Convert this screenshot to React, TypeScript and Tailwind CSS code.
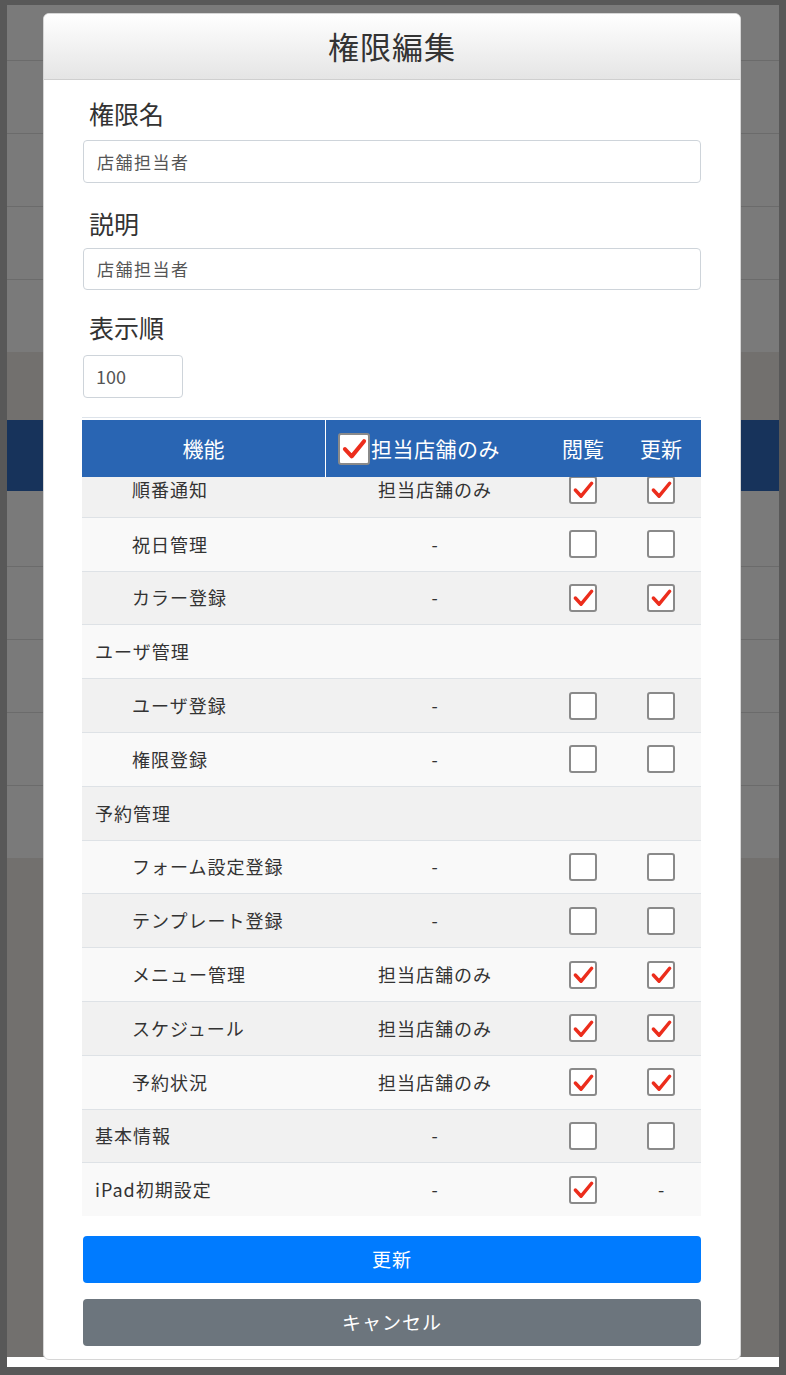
import React from "react";

type Row = {
  name: string;
  indent: boolean;
  scope: string | null;
  view: boolean | null;
  edit: boolean | null;
};

const ROWS: Row[] = [
  { name: "順番通知", indent: true, scope: "担当店舗のみ", view: true, edit: true },
  { name: "祝日管理", indent: true, scope: "-", view: false, edit: false },
  { name: "カラー登録", indent: true, scope: "-", view: true, edit: true },
  { name: "ユーザ管理", indent: false, scope: null, view: null, edit: null },
  { name: "ユーザ登録", indent: true, scope: "-", view: false, edit: false },
  { name: "権限登録", indent: true, scope: "-", view: false, edit: false },
  { name: "予約管理", indent: false, scope: null, view: null, edit: null },
  { name: "フォーム設定登録", indent: true, scope: "-", view: false, edit: false },
  { name: "テンプレート登録", indent: true, scope: "-", view: false, edit: false },
  { name: "メニュー管理", indent: true, scope: "担当店舗のみ", view: true, edit: true },
  { name: "スケジュール", indent: true, scope: "担当店舗のみ", view: true, edit: true },
  { name: "予約状況", indent: true, scope: "担当店舗のみ", view: true, edit: true },
  { name: "基本情報", indent: false, scope: "-", view: false, edit: false },
  { name: "iPad初期設定", indent: false, scope: "-", view: true, edit: null },
];

const FONT = {
  fontFamily: '"Noto Sans CJK JP", "Noto Sans", sans-serif',
};

const Check = ({ on, size = 28 }: { on: boolean; size?: number }) => (
  <span
    className="inline-flex items-center justify-center bg-white border-2 border-[#8a8a8a] rounded-[3px]"
    style={{ width: size, height: size }}
  >
    {on && (
      <svg viewBox="0 0 24 24" width={size - 5} height={size - 5}>
        <path
          d="M3.5 12.5 L9.5 19 L20.5 5.5"
          fill="none"
          stroke="#ec2d1c"
          strokeWidth="3.6"
          strokeLinecap="round"
          strokeLinejoin="round"
        />
      </svg>
    )}
  </span>
);

const Backdrop = () => (
  <div className="flex flex-col h-full">
    <div className="h-[55px] bg-[#7a7a7a]" />
    {[0, 1, 2, 3].map((i) => (
      <div key={i} className="h-[73px] bg-[#7a7a7a] border-t border-[#6b6b6b]" />
    ))}
    <div className="h-[68px] bg-[#72706e]" />
    <div className="h-[71px] bg-[#17335b]" />
    <div className="h-[75px] bg-[#7a7a7a]" />
    {[0, 1, 2, 3].map((i) => (
      <div key={i} className="h-[73px] bg-[#7a7a7a] border-t border-[#6b6b6b]" />
    ))}
    <div className="flex-1 bg-[#72706e]" />
    <div className="h-[10px] bg-white" />
  </div>
);

export default function App() {
  return (
    <div
      className="w-[786px] h-[1375px] bg-[#585858] pt-[5px] pl-[7px] pr-[7px] pb-[8px]"
      style={FONT}
    >
      <div className="relative h-full">
        <Backdrop />
        <div className="absolute left-[36px] top-[8px] w-[698px] h-[1347px] bg-white rounded-[6px] border border-[#d6d6d6] overflow-hidden flex flex-col">
          <div className="h-[66px] shrink-0 bg-gradient-to-b from-white to-[#e5e5e5] border-b border-[#cfcfcf] flex items-center justify-center">
            <span className="text-[31px] text-[#333] tracking-[1px]">権限編集</span>
          </div>
          <div className="px-[39px] flex flex-col">
            <div className="mt-[16px] h-[36px] pl-[6px] flex items-center text-[25px] text-[#333]">
              権限名
            </div>
            <div className="mt-[8px] h-[43px] rounded-[4px] border border-[#ced4da] flex items-center px-[13px] text-[17px] tracking-[1.5px] text-[#555]">
              店舗担当者
            </div>
            <div className="mt-[23px] h-[36px] pl-[6px] flex items-center text-[25px] text-[#333]">
              説明
            </div>
            <div className="mt-[6px] h-[42px] rounded-[4px] border border-[#ced4da] flex items-center px-[13px] text-[17px] tracking-[1.5px] text-[#555]">
              店舗担当者
            </div>
            <div className="mt-[20px] h-[36px] pl-[6px] flex items-center text-[25px] text-[#333]">
              表示順
            </div>
            <div className="mt-[9px] h-[43px] w-[100px] rounded-[4px] border border-[#ced4da] flex items-center px-[12px] text-[18px] text-[#555]">
              100
            </div>

            <div className="mt-[19px] -ml-px">
              <div className="h-px bg-[#dde3ea]" />
              <div className="h-[2px]" />
              <div className="relative z-10 h-[57px] bg-[#2965b3] text-white text-[21px] flex items-center">
                <div className="w-[244px] h-full flex items-center justify-center border-r border-white">
                  機能
                </div>
                <div className="w-[218px] h-full flex items-center pl-[12px]">
                  <Check on size={32} />
                  <span className="ml-[1px] tracking-[0.5px]">担当店舗のみ</span>
                </div>
                <div className="w-[78px] text-center">閲覧</div>
                <div className="w-[78px] text-center">更新</div>
              </div>
              <div className="h-[739px] overflow-hidden">
                <div className="-mt-[14px]">
                  {ROWS.map((r, i) => (
                    <div
                      key={r.name}
                      className={`h-[53.8px] flex items-center text-[18px] text-[#333] ${
                        i % 2 === 0 ? "bg-[#f1f1f1]" : "bg-[#f9f9f9]"
                      } ${i > 0 ? "border-t border-[#dee2e6]" : ""}`}
                    >
                      <div
                        className={`w-[244px] tracking-[1px] ${
                          r.indent ? "pl-[50px]" : "pl-[13px]"
                        }`}
                      >
                        {r.name}
                      </div>
                      <div className="w-[218px] text-center tracking-[1px]">
                        {r.scope ?? ""}
                      </div>
                      <div className="w-[78px] flex justify-center">
                        {r.view !== null && <Check on={r.view} />}
                      </div>
                      <div className="w-[78px] flex justify-center">
                        {r.edit !== null ? (
                          <Check on={r.edit} />
                        ) : r.scope !== null ? (
                          <span>-</span>
                        ) : null}
                      </div>
                    </div>
                  ))}
                </div>
              </div>
            </div>

            <button className="mt-[20px] h-[47px] w-full rounded-[4px] bg-[#007bff] text-white text-[19px] tracking-[1px]">
              更新
            </button>
            <button className="mt-[16px] h-[47px] w-full rounded-[4px] bg-[#6c757d] text-white text-[19px] tracking-[1px]">
              キャンセル
            </button>
          </div>
        </div>
      </div>
    </div>
  );
}
